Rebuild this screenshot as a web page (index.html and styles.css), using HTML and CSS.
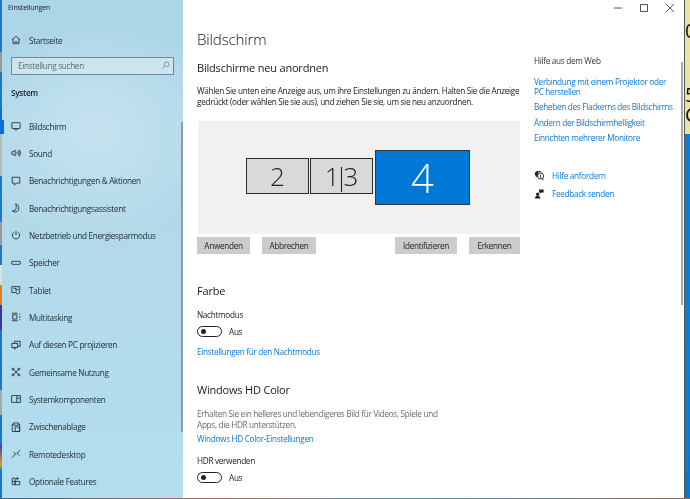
FILE: index.html
```html
<!DOCTYPE html>
<html lang="de">
<head>
<meta charset="utf-8">
<title>Einstellungen</title>
<link rel="stylesheet" href="styles.css">
</head>
<body>
<div class="desktop">
  <div class="strip-left"></div>
  <div class="window">
    <aside class="sidebar">
      <div class="app-title">Einstellungen</div>
      <a class="nav-row home">
        <svg class="nav-icon" viewBox="0 0 12 12"><path d="M1 6 6 1.500 11 6M2.500 5v5.500h2.500V8h2v2.500h2.500V5"/></svg>
        <span>Startseite</span>
      </a>
      <div class="search">
        <span>Einstellung suchen</span>
        <svg class="search-icon" viewBox="0 0 12 12"><circle cx="7.500" cy="4.500" r="3.200"/><path d="M5.200 6.800 1.500 10.500"/></svg>
      </div>
      <div class="section-label">System</div>
      <nav class="nav">
        <a class="nav-row active">
          <svg class="nav-icon" viewBox="0 0 12 12"><rect x="1" y="2" width="10" height="7" rx=".6"/><path d="M4 10.500h4"/></svg>
          <span>Bildschirm</span>
        </a>
        <a class="nav-row">
          <svg class="nav-icon" viewBox="0 0 12 12"><path d="M1 4.500v3h1.500L5 9.500v-7L2.500 4.500zM7 4.500q1 1.500 0 3M8.700 3q2 3 0 6M10.200 2q2.500 4 0 8"/></svg>
          <span>Sound</span>
        </a>
        <a class="nav-row">
          <svg class="nav-icon" viewBox="0 0 12 12"><path d="M1.500 1.500h9v7H6.500L4 11V8.500H1.500z"/></svg>
          <span>Benachrichtigungen &amp; Aktionen</span>
        </a>
        <a class="nav-row">
          <svg class="nav-icon" viewBox="0 0 12 12"><path d="M5.500 1Q9 2 9.500 5.500 10 9 6.500 10.500 3.500 11.500 1.500 9.500 5 10 6 7 7 4 5.500 1z"/></svg>
          <span>Benachrichtigungsassistent</span>
        </a>
        <a class="nav-row">
          <svg class="nav-icon" viewBox="0 0 12 12"><path d="M6 1v5M3.500 2.800a4.300 4.300 0 1 0 5 0"/></svg>
          <span>Netzbetrieb und Energiesparmodus</span>
        </a>
        <a class="nav-row">
          <svg class="nav-icon" viewBox="0 0 12 12"><rect x=".8" y="4" width="10.400" height="3.600" rx=".8"/></svg>
          <span>Speicher</span>
        </a>
        <a class="nav-row">
          <svg class="nav-icon" viewBox="0 0 12 12"><path d="M5 9H1V2h9.500v3.500"/><rect x="6" y="5.500" width="4.500" height="5" rx="1.500"/><path d="M3 4h3v2"/></svg>
          <span>Tablet</span>
        </a>
        <a class="nav-row">
          <svg class="nav-icon" viewBox="0 0 12 12"><path d="M1 1.500h7M1 10.500h7M2 3.500h5v5H2zM10.500 2v1.500M10.500 5v2M10.500 8.500V10"/></svg>
          <span>Multitasking</span>
        </a>
        <a class="nav-row">
          <svg class="nav-icon" viewBox="0 0 12 12"><path d="M4 4V1.500h7v6H8"/><rect x="1" y="4" width="7" height="5"/><path d="M3 10.500h3"/></svg>
          <span>Auf diesen PC projizieren</span>
        </a>
        <a class="nav-row">
          <svg class="nav-icon" viewBox="0 0 12 12"><path d="m3 3 6 6M9 3 3 9"/><circle cx="2.500" cy="2.500" r="1.200"/><circle cx="9.500" cy="2.500" r="1.200"/><circle cx="2.500" cy="9.500" r="1.200"/><circle cx="9.500" cy="9.500" r="1.200"/></svg>
          <span>Gemeinsame Nutzung</span>
        </a>
        <a class="nav-row">
          <svg class="nav-icon" viewBox="0 0 12 12"><rect x=".8" y="2" width="10.400" height="8"/><path d="M7 2v8M7 5h4"/></svg>
          <span>Systemkomponenten</span>
        </a>
        <a class="nav-row">
          <svg class="nav-icon" viewBox="0 0 12 12"><path d="M3.500 2.500H1.500v9h9v-9H8.500M3.500 1h5v3h-5zM5 6h5v5.500H5z"/></svg>
          <span>Zwischenablage</span>
        </a>
        <a class="nav-row">
          <svg class="nav-icon" viewBox="0 0 12 12"><path d="M1 10.500 5.500 6 3 3.500M11 1.500 7 5l3 3"/></svg>
          <span>Remotedesktop</span>
        </a>
        <a class="nav-row">
          <svg class="nav-icon" viewBox="0 0 12 12"><path d="M1.500 2.500h3.500v8H1.500zM5 6.500h5.500v4H5zM1.500 6.500H5M7.500 1v4M5.800 3h3.600"/></svg>
          <span>Optionale Features</span>
        </a>
      </nav>
      <div class="sidebar-scroll"></div>
    </aside>
    <section class="content">
      <header class="titlebar">
        <svg class="win-btn" viewBox="0 0 10 10"><path d="M1 5h8"/></svg>
        <svg class="win-btn" viewBox="0 0 10 10"><path d="M1.500 1.500h7v7h-7z"/></svg>
        <svg class="win-btn" viewBox="0 0 10 10"><path d="m1 1 8 8M9 1 1 9"/></svg>
      </header>
      <div class="columns">
        <main class="main">
          <h1>Bildschirm</h1>
          <h2 class="h2-first">Bildschirme neu anordnen</h2>
          <p class="desc">Wählen Sie unten eine Anzeige aus, um ihre Einstellungen zu ändern. Halten Sie die Anzeige gedrückt (oder wählen Sie sie aus), und ziehen Sie sie, um sie neu anzuordnen.</p>
          <div class="arrange">
            <div class="monitor small">2</div>
            <div class="monitor small tight">1|3</div>
            <div class="monitor large">4</div>
          </div>
          <div class="buttons">
            <button class="btn b-apply">Anwenden</button>
            <button class="btn b-cancel">Abbrechen</button>
            <button class="btn b-ident">Identifizieren</button>
            <button class="btn b-detect">Erkennen</button>
          </div>
          <h2 class="h2-farbe">Farbe</h2>
          <div class="field-label first">Nachtmodus</div>
          <div class="toggle-row"><span class="toggle"></span><span>Aus</span></div>
          <a class="link night-link">Einstellungen für den Nachtmodus</a>
          <h2 class="h2-hd">Windows HD Color</h2>
          <p class="desc grey">Erhalten Sie ein helleres und lebendigeres Bild für Videos, Spiele und Apps, die HDR unterstützen.</p>
          <a class="link hd-link">Windows HD Color-Einstellungen</a>
          <div class="field-label hdr">HDR verwenden</div>
          <div class="toggle-row"><span class="toggle"></span><span>Aus</span></div>
        </main>
        <aside class="help">
          <div class="help-title">Hilfe aus dem Web</div>
          <a class="link help-link narrow">Verbindung mit einem Projektor oder PC herstellen</a>
          <a class="link help-link">Beheben des Flackerns des Bildschirms</a>
          <a class="link help-link">Ändern der Bildschirmhelligkeit</a>
          <a class="link help-link">Einrichten mehrerer Monitore</a>
          <div class="help-actions">
            <a class="help-action">
              <svg class="help-icon" viewBox="0 0 12 12"><path class="solid" d="M4.500 1C2 1 .8 2.500.8 4.200c0 1 .5 1.800 1.200 2.300V8l1.500-1h1V2.500h4Q7.500 1 4.500 1z"/><circle class="ring" cx="7.200" cy="6.500" r="3.300"/><path class="solid" d="M6.700 5h1v2.500h-1zM6.700 8h1v1h-1zM9.300 9l1.500 1.700-.7.600L8.600 9.700z"/></svg>
              <span class="link">Hilfe anfordern</span>
            </a>
            <a class="help-action">
              <svg class="help-icon" viewBox="0 0 12 12"><path class="solid" d="M5.500 1.500h5v3.500H8L6.500 6.300V5h-1z"/><circle class="solid" cx="4" cy="6.800" r="1.800"/><path class="solid" d="M1 11.500c0-2 1.200-3 3-3s3 1 3 3z"/></svg>
              <span class="link">Feedback senden</span>
            </a>
          </div>
        </aside>
      </div>
      <div class="main-scroll"></div>
    </section>
  </div>
  <div class="strip-right">
    <div class="poster">
      <span class="poster-a">0</span>
      <span class="poster-b">5</span>
      <span class="poster-c">C</span>
    </div>
  </div>
</div>
<div class="bottom-line"></div>
</body>
</html>
```
FILE: styles.css
```css
* { box-sizing: border-box; }
html, body { margin: 0; padding: 0; height: 499px; width: 690px; overflow: hidden; background: #fff; }
body {
  font-family: "Open Sans", "Noto Sans", sans-serif;
  font-size: 8.2px;
  color: #1a1a1a;
  letter-spacing: -0.3px;
}
.desktop { display: flex; height: 498px; filter: blur(.3px); }
.strip-left {
  width: 2px;
  background: linear-gradient(180deg, #1c78c4 0, #1c78c4 52px, #9a9a9a 52px, #9a9a9a 72px, #1c78c4 72px, #1c78c4 108px, #0b6fd0 108px, #0b6fd0 132px, #b8b8b8 132px, #b8b8b8 176px, #1c78c4 176px, #1c78c4 222px, #999 222px, #999 245px, #1c78c4 245px, #1c78c4 265px, #ddd 265px, #ddd 285px, #d9822b 285px, #d9822b 305px, #3a3a9a 305px, #3a3a9a 330px, #1c78c4 330px, #1c78c4 390px, #aaa 390px, #aaa 415px, #1c78c4 415px, #1c78c4 445px, #4a3a9a 445px, #d9a02b 465px, #1c78c4 470px);
}
.window { width: 682px; display: flex; background: #fff; }
.sidebar {
  position: relative;
  width: 181px;
  flex: none;
  padding-top: 2px;
  background:
    radial-gradient(ellipse 130px 110px at 95px 130px, #c6e3ef 0, rgba(198,227,239,0) 100%),
    linear-gradient(180deg, #abd6e8 0, #b3d9e9 45%, #b2deef 100%);
}
.app-title { height: 12px; line-height: 12px; padding-left: 6px; font-size: 7px; letter-spacing: -.12px; }
.nav-row { display: flex; align-items: center; height: 27.330px; padding-left: 9px; gap: 8px; position: relative; color: #1d2a30; }
.nav-row.home { margin-top: 12.500px; height: 27px; }
.nav-row.active::before { content: ""; position: absolute; left: -2px; top: 7px; width: 4px; height: 14px; background: #0a6fd0; }
.nav-icon { width: 10px; height: 10px; flex: none; fill: none; stroke: #1d2a30; stroke-width: 1; }
.search {
  margin: 3.500px 9px 0 9px;
  height: 18px;
  border: 1px solid #6e8a97;
  background: #cde5ef;
  display: flex;
  align-items: center;
  justify-content: space-between;
  padding: 0 3px 1px 6px;
  color: #5a6b74;
}
.search-icon { width: 9px; height: 9px; fill: none; stroke: #66777f; stroke-width: .9; }
.section-label { margin-top: 11px; height: 14px; line-height: 14px; padding-left: 9px; font-weight: 600; color: #15212a; }
.nav { margin-top: 12.500px; }
.sidebar-scroll { position: absolute; right: 0; top: 122px; width: 2px; height: 310px; background: #8b9ea8; }
.content { position: relative; flex: 1; display: flex; flex-direction: column; min-width: 0; }
.titlebar { height: 15px; padding-top: 3px; display: flex; justify-content: flex-end; gap: 16px; padding-right: 9px; }
.win-btn { width: 10px; height: 10px; fill: none; stroke: #444; stroke-width: .9; }
.columns { display: flex; flex: 1; min-height: 0; }
.main { width: 337px; margin-left: 14px; flex: none; }
h1 { margin: 13px 0 0; font-size: 15.200px; line-height: 22px; font-weight: 300; color: #111; letter-spacing: -.2px; }
h2 { margin: 0; font-size: 11px; line-height: 15px; font-weight: 400; color: #1a1a1a; letter-spacing: -.2px; }
.h2-first { margin-top: 10px; }
.desc { margin: 10px 0 0; line-height: 11px; width: 330px; letter-spacing: -.3px; }
.desc.grey { color: #6a6a6a; width: 245px; margin-top: 11px; }
.arrange {
  margin: 14px 0 0 1px;
  width: 322px;
  height: 113px;
  padding-right: 2px;
  background: #f1f1f1;
  display: flex;
  align-items: center;
  justify-content: center;
  gap: 1px;
}
.monitor { display: flex; align-items: center; justify-content: center; font-weight: 300; letter-spacing: 0; }
.monitor.small { width: 63px; height: 36px; margin-bottom: 3px; background: #d9d9d9; border: 1px solid #2b2b2b; color: #222; font-size: 26px; }
.monitor.tight { letter-spacing: -5px; padding-right: 5px; }
.monitor.large { width: 95px; height: 55px; background: #0078d7; border: 1px solid #333; color: #fff; font-size: 40px; margin-left: 1px; }
.buttons { display: flex; margin-top: 3px; width: 323px; height: 17px; }
.btn { height: 17px; border: 0; padding: 0; background: #ccc; color: #222; font: inherit; letter-spacing: inherit; }
.b-apply { width: 53px; }
.b-cancel { width: 54px; margin-left: 12px; }
.b-ident { width: 62px; margin-left: 79px; }
.b-detect { width: 51px; margin-left: 12px; }
.h2-farbe { margin-top: 29px; }
.field-label { line-height: 12px; }
.field-label.first { margin-top: 11px; }
.toggle-row { display: flex; align-items: center; gap: 7px; margin-top: 5px; height: 11px; }
.toggle { position: relative; width: 25px; height: 11px; border: 1px solid #222; border-radius: 6px; }
.toggle::after { content: ""; position: absolute; left: 3px; top: 2px; width: 5px; height: 5px; border-radius: 50%; background: #222; }
.link { color: #0a78d4; display: block; }
.night-link { margin-top: 9px; line-height: 12px; }
.h2-hd { margin-top: 24px; }
.hd-link { margin-top: 3px; line-height: 12px; }
.field-label.hdr { margin-top: 10px; }
.help { width: 146px; padding-top: 40px; }
.help-title { line-height: 12px; color: #333; }
.help-link { margin-top: 5.300px; line-height: 10px; }
.help-link.narrow { margin-top: 10px; width: 136px; }
.help-actions { margin-top: 27px; display: flex; flex-direction: column; gap: 7px; }
.help-action { display: flex; align-items: center; gap: 7px; height: 11px; }
.help-icon { width: 11px; height: 11px; flex: none; }
.help-icon .solid { fill: #222; stroke: none; }
.help-icon .ring { fill: #fff; stroke: #222; stroke-width: 1; }
.main-scroll { position: absolute; right: 1px; top: 62px; width: 2px; height: 243px; background: #a9a9a9; }
.strip-right { flex: 1; background: linear-gradient(180deg, #0a78d6, #0b7fd9 60%, #0a78d0); overflow: hidden; border-left: 1px solid #555; }
.poster { height: 134px; background: #e9e4a6; overflow: hidden; color: #111; font-size: 20px; line-height: 1; letter-spacing: 0; display: flex; flex-direction: column; }
.poster-a { margin-top: 21px; }
.poster-b { margin-top: 44px; }
.poster-c { margin-top: 0; }
.bottom-line { height: 1px; background: linear-gradient(90deg, #3a6a8a, #b07060 30%, #5a9ab0 60%, #8a6a5a); }
```
